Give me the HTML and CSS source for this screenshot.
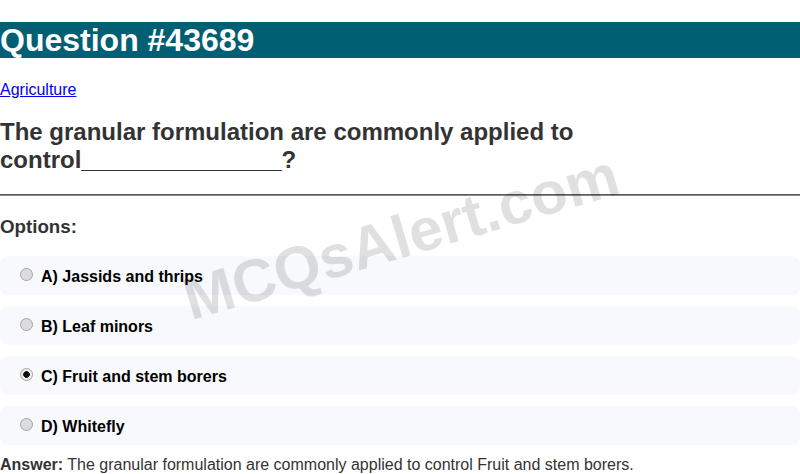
FILE: index.html
```html
<!DOCTYPE html>
<html>
<head>
<meta charset="utf-8">
<link rel="stylesheet" href="styles.css">
</head>
<body>
<div class="page">
  <h1 class="title">Question #43689</h1>
  <p class="cat"><a href="#">Agriculture</a></p>
  <h2 class="question">The granular formulation are commonly applied to control_______________?</h2>
  <hr class="rule">
  <h3 class="opts-title">Options:</h3>
  <div class="options">
    <label class="option"><input type="radio" name="q"> A) Jassids and thrips</label>
    <label class="option"><input type="radio" name="q"> B) Leaf minors</label>
    <label class="option"><input type="radio" name="q" checked> C) Fruit and stem borers</label>
    <label class="option"><input type="radio" name="q"> D) Whitefly</label>
  </div>
  <p class="answer"><b>Answer:</b> The granular formulation are commonly applied to control Fruit and stem borers.</p>
  <div class="watermark">MCQsAlert.com</div>
</div>
</body>
</html>
```
FILE: styles.css
```css
html, body {
  margin: 0;
  padding: 0;
  background: #fff;
}
body {
  font-family: "Liberation Sans", Arial, sans-serif;
  color: #333;
  overflow: hidden;
}
.page {
  position: relative;
  padding-top: 1px;
  margin-top: -1px;
}
.title {
  margin: 22px 0 0;
  font-size: 32px;
  font-weight: bold;
  color: #fff;
  background: #005f73;
  line-height: 37px;
  height: 36px;
  overflow: hidden;
}
.cat {
  margin: 23px 0 0;
  font-size: 16px;
  line-height: 18px;
}
.cat a {
  color: #0000ee;
}
.question {
  margin: 19px 0 20px;
  font-size: 24px;
  line-height: 28px;
  color: #333;
}
.rule {
  margin: 0;
  border: none;
  border-top: 1px solid #5a5a5a;
  border-bottom: 1px solid #8a8a8a;
  height: 0;
}
.opts-title {
  margin: 20px 0 18px;
  font-size: 18.72px;
  line-height: 22px;
  color: #333;
}
.options {
  display: flex;
  flex-direction: column;
  gap: 11px;
}
.option {
  display: flex;
  align-items: center;
  height: 39px;
  padding: 2px 0 0 20px;
  background: #f8f9fc;
  border-radius: 8px;
  font-size: 16px;
  font-weight: bold;
  color: #000;
  box-sizing: border-box;
}
.option input {
  appearance: none;
  -webkit-appearance: none;
  margin: 0 8px 5px 0;
  width: 13px;
  height: 13px;
  border-radius: 50%;
  border: 1px solid #a4a4a4;
  background: #dcdcdc;
  box-sizing: border-box;
  flex: none;
}
.option input:checked {
  background: radial-gradient(circle, #111 0 3px, #efefef 3.6px);
}
.answer {
  margin: 11px 0 0;
  font-size: 16px;
  line-height: 18px;
  color: #333;
}
.watermark {
  position: absolute;
  left: 401px;
  top: 238px;
  transform: translate(-50%, -50%) rotate(-16.5deg);
  font-size: 60px;
  font-weight: bold;
  color: rgba(0, 0, 0, 0.12);
  white-space: nowrap;
  pointer-events: none;
}
```
